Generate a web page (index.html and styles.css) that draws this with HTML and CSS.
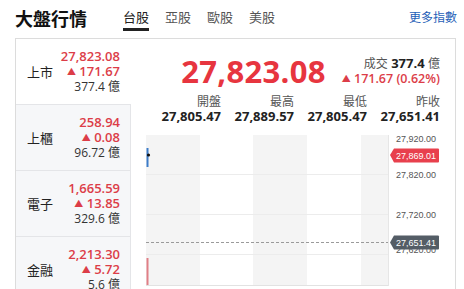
FILE: index.html
```html
<!DOCTYPE html>
<html lang="zh-Hant">
<head>
<meta charset="utf-8">
<title>大盤行情</title>
<link rel="stylesheet" href="styles.css">
</head>
<body>
<div class="top">
  <h1 class="title">大盤行情</h1>
  <nav class="tabs">
    <a class="tab active">台股</a>
    <a class="tab">亞股</a>
    <a class="tab">歐股</a>
    <a class="tab">美股</a>
  </nav>
  <a class="more">更多指數</a>
</div>
<div class="panel">
  <ul class="side">
    <li class="cell active">
      <span class="name">上市</span>
      <div class="vals"><div class="price">27,823.08</div><div class="chg"><span class="tri">▲</span> 171.67</div><div class="vol">377.4 億</div></div>
    </li>
    <li class="cell">
      <span class="name">上櫃</span>
      <div class="vals"><div class="price">258.94</div><div class="chg"><span class="tri">▲</span> 0.08</div><div class="vol">96.72 億</div></div>
    </li>
    <li class="cell">
      <span class="name">電子</span>
      <div class="vals"><div class="price">1,665.59</div><div class="chg"><span class="tri">▲</span> 13.85</div><div class="vol">329.6 億</div></div>
    </li>
    <li class="cell">
      <span class="name">金融</span>
      <div class="vals"><div class="price">2,213.30</div><div class="chg"><span class="tri">▲</span> 5.72</div><div class="vol">5.6 億</div></div>
    </li>
  </ul>
  <div class="main">
    <div class="head">
      <div class="big">27,823.08</div>
      <div class="stats">
        <div class="turn"><span class="lbl">成交</span> <b>377.4</b> <span class="unit">億</span></div>
        <div class="pct"><span class="tri">▲</span> 171.67 (0.62%)</div>
      </div>
    </div>
    <div class="ohlc">
      <div class="q"><span class="ql">開盤</span><span class="qv">27,805.47</span></div>
      <div class="q"><span class="ql">最高</span><span class="qv">27,889.57</span></div>
      <div class="q"><span class="ql">最低</span><span class="qv">27,805.47</span></div>
      <div class="q"><span class="ql">昨收</span><span class="qv">27,651.41</span></div>
    </div>
    <div class="chart">
      <svg class="plot" width="300" height="156" viewBox="0 0 300 156">
        <rect x="0" y="0" width="54" height="150" fill="#f4f4f4"/>
        <rect x="107" y="0" width="54" height="150" fill="#f4f4f4"/>
        <rect x="215" y="0" width="27" height="150" fill="#f4f4f4"/>
        <line x1="0" y1="39.5" x2="242" y2="39.5" stroke="#ececec"/>
        <line x1="0" y1="79.5" x2="242" y2="79.5" stroke="#ececec"/>
        <line x1="0" y1="119.5" x2="242" y2="119.5" stroke="#ececec"/>
        <line x1="0" y1="150.5" x2="242" y2="150.5" stroke="#e2e2e2"/>
        <line x1="242.5" y1="0" x2="242.5" y2="151" stroke="#e6e6e6"/>
        <line x1="0" y1="107.5" x2="242" y2="107.5" stroke="#9a9a9a" stroke-dasharray="3 2"/>
        <line x1="1.5" y1="13" x2="1.5" y2="32" stroke="#3d7cc9" stroke-width="2"/>
        <circle cx="2.5" cy="20" r="1.6" fill="#111"/>
        <rect x="0.5" y="123" width="2" height="27" fill="#e07f86"/>
        <text class="ylab" x="250" y="7">27,920.00</text>
        <text class="ylab" x="250" y="43">27,820.00</text>
        <text class="ylab" x="250" y="83">27,720.00</text>
        <text class="ylab" x="250" y="118">27,620.00</text>
        <path d="M244 20 L248 13.5 L292 13.5 Q293 13.5 293 14.5 L293 26.5 Q293 27.5 292 27.5 L248 27.5 Z" fill="#e8404d"/>
        <text class="tag" x="250" y="24">27,869.01</text>
        <path d="M244 107.5 L248 100.5 L292 100.5 Q293 100.5 293 101.5 L293 113.5 Q293 114.5 292 114.5 L248 114.5 Z" fill="#545d66"/>
        <text class="tag" x="250" y="111">27,651.41</text>
      </svg>
    </div>
  </div>
</div>
</body>
</html>
```
FILE: styles.css
```css
* { box-sizing: border-box; }
html, body { margin: 0; padding: 0; }
body {
  width: 464px;
  height: 289px;
  overflow: hidden;
  background: #fff;
  font-family: "Open Sans", "Noto Sans CJK TC", sans-serif;
  color: #222;
}
.top {
  display: flex;
  align-items: flex-start;
  height: 38px;
  padding: 0 7px 0 15px;
}
.title {
  margin: 6px 0 0 0;
  font-size: 18px;
  line-height: 24px;
  font-weight: 700;
  font-family: "Noto Sans CJK TC", sans-serif;
  color: #111;
}
.tabs {
  display: flex;
  gap: 16px;
  margin-left: 36px;
  margin-top: 7px;
}
.tab {
  display: block;
  font-family: "Noto Sans CJK TC", sans-serif;
  font-size: 13px;
  line-height: 20px;
  color: #555;
  padding-bottom: 1px;
  border-bottom: 3px solid transparent;
}
.tab.active {
  color: #222;
  border-bottom-color: #222;
}
.more {
  margin-left: auto;
  margin-top: 8px;
  font-family: "Noto Sans CJK TC", sans-serif;
  font-size: 12px;
  line-height: 18px;
  color: #1f5fb8;
}
.panel {
  display: flex;
  margin: 0 8px 0 15px;
  border: 1px solid #dcdcdc;
  height: 260px;
}
.side {
  list-style: none;
  margin: 0;
  padding: 0;
  width: 115px;
  flex: none;
}
.cell {
  display: flex;
  align-items: center;
  justify-content: space-between;
  height: 66px;
  padding: 0 10px 0 11px;
  background: #f6f7f9;
  border-top: 1px solid #e4e5e8;
  border-right: 1px solid #e4e5e8;
}
.cell.active {
  background: #fff;
  border-top: none;
  border-right-color: transparent;
  height: 65px;
}
.name {
  font-family: "Noto Sans CJK TC", sans-serif;
  font-size: 13px;
  color: #222;
}
.vals {
  text-align: right;
}
.vals > div {
  height: 15px;
  line-height: 15px;
}
.price, .chg {
  color: #dc3d48;
  font-size: 13px;
  font-weight: 600;
}
.tri {
  font-size: 9px;
  vertical-align: 1px;
}
.vol {
  font-size: 12px;
  color: #333;
}
.main {
  flex: 1;
  padding: 9px 15px 0 15px;
  min-width: 0;
}
.head {
  display: flex;
  justify-content: flex-end;
  align-items: center;
  height: 46px;
  gap: 16px;
}
.big {
  font-size: 31px;
  font-weight: 700;
  color: #e7353f;
  letter-spacing: 0.3px;
  line-height: 40px;
}
.stats {
  text-align: right;
  font-size: 13px;
  line-height: 16.5px;
}
.turn { color: #555; }
.turn .lbl, .turn .unit { font-family: "Noto Sans CJK TC", sans-serif; font-size: 12px; }
.turn b { color: #222; font-weight: 700; }
.pct { color: #dc3d48; font-weight: 600; font-size: 12.5px; }
.ohlc {
  display: grid;
  grid-template-columns: repeat(4, 73px);
  justify-content: end;
}
.q {
  display: flex;
  flex-direction: column;
  align-items: flex-end;
}
.ql {
  font-family: "Noto Sans CJK TC", sans-serif;
  font-size: 12px;
  line-height: 14px;
  color: #555;
}
.qv {
  font-size: 13px;
  line-height: 16px;
  font-weight: 700;
  color: #222;
}
.chart {
  margin-top: 11px;
}
.plot { display: block; }
.ylab {
  font-family: "Liberation Sans", sans-serif;
  font-size: 9px;
  fill: #555;
}
.tag {
  font-family: "Liberation Sans", sans-serif;
  font-size: 9px;
  fill: #fff;
}
```
